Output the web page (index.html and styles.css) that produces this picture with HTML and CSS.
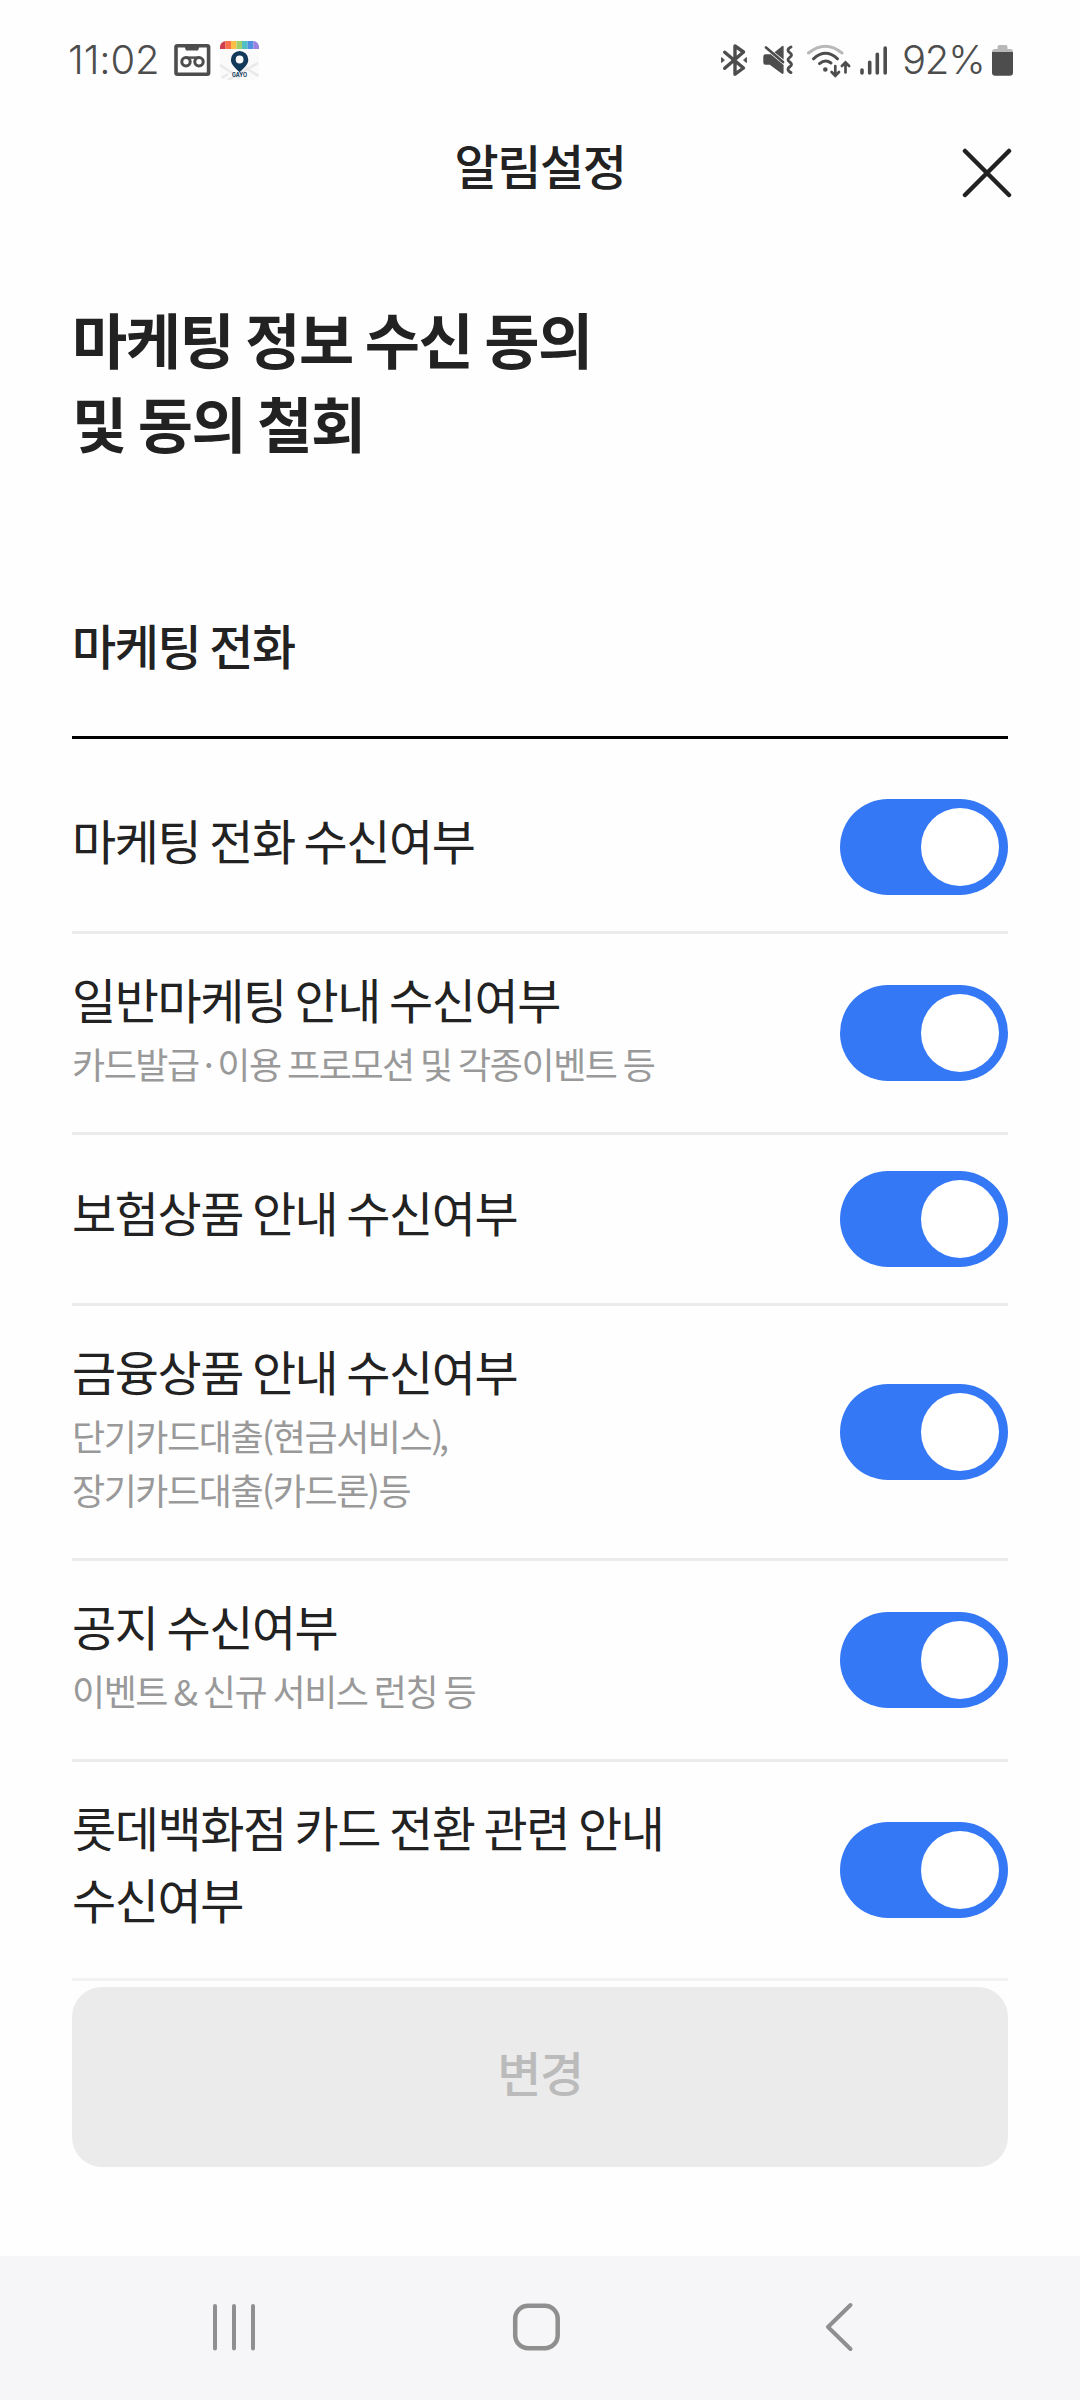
FILE: index.html
```html
<!DOCTYPE html>
<html lang="ko">
<head>
<meta charset="utf-8">
<title>알림설정</title>
<link rel="stylesheet" href="styles.css">
</head>
<body>
<div class="screen">
  <div class="status">
    <span class="clock">11:02</span>
    <svg class="cassette" viewBox="174 44 37 34" width="37" height="34" fill="none" stroke="#4d4d4d">
      <rect x="176" y="46.7" width="32.6" height="28.6" rx="1.5" stroke-width="3.6"/>
      <path d="M184 46h16l-2 5.500h-12z" fill="#4d4d4d" stroke="none"/>
      <circle cx="186" cy="62.800" r="4.200" stroke-width="3"/>
      <circle cx="199" cy="62.800" r="4.200" stroke-width="3"/>
      <path d="M186 58.600h13" stroke-width="2.400"/>
    </svg>
    <svg class="app-icon" viewBox="220 42 39 39" width="39" height="39">
      <clipPath id="app"><rect x="220" y="42" width="39" height="39" rx="6"/></clipPath>
      <g clip-path="url(#app)">
        <path fill="#fafafa" d="M220 42h39v39h-39z"/>
        <path d="M220 66l20 13M228 81l30-17M246 69l14 9M220 80l8-5" stroke="#e9e9eb" stroke-width="2.500"/>
        <path fill="#cf3e4c" d="M220 42h5.500v8h-5.500z"/>
        <path fill="#f9704c" d="M225.500 42h5.500v8h-5.500z"/>
        <path fill="#fdbf45" d="M231 42h5.500v8h-5.500z"/>
        <path fill="#9fd06b" d="M236.500 42h5.500v8h-5.500z"/>
        <path fill="#52bfc4" d="M242 42h5.500v8h-5.500z"/>
        <path fill="#4f90e2" d="M247.500 42h6v8h-6z"/>
        <path fill="#9b82e0" d="M253.500 42h5.500v8h-5.500z"/>
      </g>
      <path fill="#12395a" fill-rule="evenodd" d="M239.600 52a8.700 8.700 0 0 1 8.700 8.700c0 5-4.500 8-8.700 12.600-4.200-4.600-8.700-7.600-8.700-12.600a8.700 8.700 0 0 1 8.700-8.700zm0 4.600a3.900 3.900 0 1 0 0 7.800 3.900 3.900 0 0 0 0-7.800z"/>
      <text class="app-name" x="239.500" y="78" text-anchor="middle" textLength="15" lengthAdjust="spacingAndGlyphs">GAYO</text>
    </svg>
    <svg class="bluetooth" viewBox="720 44 28 34" width="28" height="34" fill="none" stroke="#4d4d4d" stroke-width="3.400" stroke-linecap="round" stroke-linejoin="round">
      <path d="M724.700 53.200L743.500 69l-8.500 6.200V47l8.500 6-18.800 16.300"/>
      <path d="M721.600 59v4.500l2.600-2.200zM746.400 59v4.500l-2.600-2.200z" fill="#4d4d4d" stroke-width="1"/>
    </svg>
    <svg class="mute" viewBox="762 44 32 34" width="32" height="34" fill="#4d4d4d">
      <path d="M765.500 55.300h5.200L783.600 66v7.500q0 2.300-2 1L769.800 65.700h-4.300q-2.200 0-2.200-2.200v-6q0-2.200 2.200-2.200z"/>
      <path d="M774.500 53.200l7.500-6q1.600-1 1.600 1v12.200z"/>
      <path d="M766 48.500L783 63" fill="none" stroke="#4d4d4d" stroke-width="2.700" stroke-linecap="round"/>
      <path d="M791 48q-3 1.500-3 3.300c0 2.200 3.500 2.400 3.500 4.700s-3.500 2.400-3.500 4.700 3.500 2.400 3.500 4.700-3.500 2.500-3.500 4.800q0 1.800 3 3.400" fill="none" stroke="#4d4d4d" stroke-width="2.900" stroke-linecap="round"/>
    </svg>
    <svg class="wifi" viewBox="806 42 46 36" width="46" height="36" fill="none" stroke="#4d4d4d" stroke-width="3" stroke-linecap="round">
      <path d="M808.500 53q17-13.600 33.500 0" stroke="#b8b8b8"/>
      <path d="M813.500 58.800q12-11 24 0M819.500 63.600q6-5 11.500-.600"/>
      <circle cx="825.300" cy="69.500" r="2.300" fill="#4d4d4d" stroke="none"/>
      <path d="M835.300 66v9.500M831.600 72l3.700 3.800 3.700-3.800M845.500 72.500v-9.500M841.900 66l3.600-3.600 3.600 3.600" stroke-width="2.700"/>
    </svg>
    <svg class="signal" viewBox="860 44 28 32" width="28" height="32" stroke="#4d4d4d" stroke-width="3.600" stroke-linecap="round">
      <path d="M862 70v3M869.700 62.300V73M877.300 54.300V73M885.200 48V73"/>
    </svg>
    <span class="charge">92%</span>
    <svg class="battery" viewBox="992 44 22 33" width="22" height="33">
      <path fill="#b8b8b8" d="M992 54v-2q0-3 3-3h2.500v-2q0-2 2-2h6q2 0 2 2v2h2.500q3 0 3 3v2z"/>
      <path fill="#4d4d4d" d="M992 52h21v20.500q0 3.200-3.200 3.200h-14.600q-3.200 0-3.200-3.200z"/>
    </svg>
  </div>

  <header class="header">
    <h1 class="title">알림설정</h1>
    <svg class="close" viewBox="962 147 50 52" width="50" height="52" stroke="#222" stroke-width="4.500" stroke-linecap="round">
      <path d="M965 151l44 44M1009 151l-44 44"/>
    </svg>
  </header>

  <main class="content">
    <h2 class="headline">마케팅 정보 수신 동의<br>및 동의 철회</h2>
    <h3 class="section">마케팅 전화</h3>
    <ul class="list">
      <li class="row row-first">
        <div class="text"><p class="name">마케팅 전화 수신여부</p></div>
        <span class="toggle"><i class="knob"></i></span>
      </li>
      <li class="row">
        <div class="text"><p class="name">일반마케팅 안내 수신여부</p><p class="desc">카드발급<span class="dot">·</span>이용 프로모션 및 각종이벤트 등</p></div>
        <span class="toggle"><i class="knob"></i></span>
      </li>
      <li class="row">
        <div class="text"><p class="name">보험상품 안내 수신여부</p></div>
        <span class="toggle"><i class="knob"></i></span>
      </li>
      <li class="row">
        <div class="text"><p class="name">금융상품 안내 수신여부</p><p class="desc">단기카드대출(현금서비스)<span class="comma">,</span><br>장기카드대출(카드론)등</p></div>
        <span class="toggle"><i class="knob"></i></span>
      </li>
      <li class="row">
        <div class="text"><p class="name">공지 수신여부</p><p class="desc">이벤트 &amp; 신규 서비스 런칭 등</p></div>
        <span class="toggle"><i class="knob"></i></span>
      </li>
      <li class="row row-last">
        <div class="text"><p class="name">롯데백화점 카드 전환 관련 안내<br>수신여부</p></div>
        <span class="toggle"><i class="knob"></i></span>
      </li>
    </ul>
    <button class="submit" disabled>변경</button>
  </main>

  <nav class="navbar">
    <svg viewBox="211 2300 46 54" width="46" height="54" stroke="#8f8f8f" stroke-width="4" stroke-linecap="round">
      <path d="M215 2306v42.500M234 2306v42.500M253 2306v42.500"/>
    </svg>
    <svg class="home" viewBox="511 2300 50 54" width="50" height="54" fill="none" stroke="#8f8f8f" stroke-width="4.500">
      <rect x="515.200" y="2305.700" width="42.500" height="42.500" rx="13"/>
    </svg>
    <svg class="back" viewBox="824 2300 30 54" width="30" height="54" fill="none" stroke="#8f8f8f" stroke-width="4" stroke-linecap="round" stroke-linejoin="round">
      <path d="M850.500 2305L828 2327l22.500 22"/>
    </svg>
  </nav>
</div>
</body>
</html>
```
FILE: styles.css
```css
* { box-sizing: border-box; margin: 0; padding: 0; }

body {
  background: #fefefe;
  color: #222;
  font-family: "Noto Sans CJK KR", sans-serif;
  letter-spacing: -1.44px;
}

.screen { width: 1080px; height: 2400px; display: flex; flex-direction: column; overflow: hidden; }
svg { display: block; flex: none; }

.status {
  height: 120px;
  padding-left: 68px;
  display: flex;
  align-items: center;
  color: #4d4d4d;
  font-family: Inter, sans-serif;
  font-size: 40px;
  font-weight: 350;
  line-height: 48px;
}
.clock { width: 106px; letter-spacing: -0.1px; }
.app-icon { margin-left: 9px; }
.app-name { font: 700 5.500px Inter, sans-serif; letter-spacing: 0; fill: #12395a; }
.bluetooth { margin-left: 461px; }
.mute { margin-left: 14px; }
.wifi { margin-left: 12px; }
.signal { margin-left: 8px; }
.charge { width: 90px; margin-left: 14px; letter-spacing: -1.2px; white-space: nowrap; }

.header {
  height: 108px;
  padding: 8px 68px 0 118px;
  display: flex;
  align-items: flex-start;
}
.title { flex: 1; text-align: center; font-size: 48px; font-weight: 500; line-height: 72px; }
.close { margin-top: 19px; }

.content { flex: 1; padding: 68px 72px 0; word-spacing: -3px; }
.headline { font-size: 60px; font-weight: 700; line-height: 84px; word-spacing: -3.400px; }
.section {
  height: 275px;
  padding-top: 144px;
  border-bottom: 3px solid #000;
  font-size: 48px;
  font-weight: 500;
  line-height: 72px;
}

.list { list-style: none; }
.row {
  padding: 36px 0;
  display: flex;
  align-items: center;
  justify-content: space-between;
  border-bottom: 3px solid #ebebeb;
}
.row-first { padding-top: 60px; }
.row-last { border-color: #f2f2f2; }
.text { margin: -8px 0 8px; }
.name { font-size: 48px; line-height: 72px; }
.desc { margin: 2px 0 -2px; color: #999; font-size: 36px; line-height: 54px; word-spacing: -2.300px; }
.dot { margin: 0 5px; }
.comma { margin-left: -3px; }

.toggle {
  width: 168px;
  height: 96px;
  padding: 9px;
  display: flex;
  justify-content: flex-end;
  border-radius: 48px;
  background: #3478f6;
}
.knob { width: 78px; height: 78px; border-radius: 50%; background: #fff; }

.submit {
  width: 100%;
  height: 180px;
  margin-top: 6px;
  padding-bottom: 13px;
  border: 0;
  border-radius: 30px;
  background: #ebebeb;
  color: #bbb;
  font: 500 48px/72px "Noto Sans CJK KR", sans-serif;
  letter-spacing: -1.44px;
}

.navbar {
  height: 144px;
  padding: 0 0 2px 211px;
  display: flex;
  align-items: center;
  background: #f6f6f8;
}
.home { margin-left: 254px; }
.back { margin-left: 263px; }
```
